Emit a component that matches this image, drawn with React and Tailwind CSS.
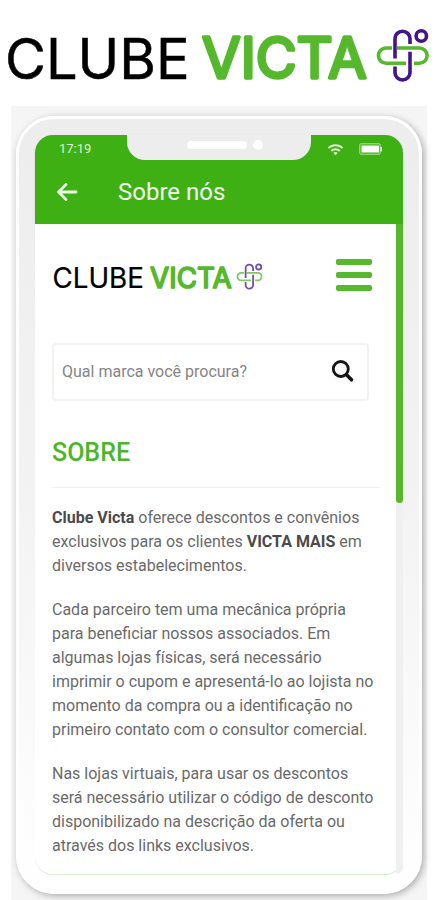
import { useState } from 'react';
import { MdWifi } from 'react-icons/md';

const Logo = ({ className, markClassName }) => (
  <svg viewBox="-4 -6 430 74" className={className} role="img" aria-label="Clube Victa">
    <text x="-3" y="51" fontFamily="Inter, sans-serif" fontSize="56" fontWeight="400" fill="#000000" stroke="#000000" strokeWidth="0.5">
      CLUBE
    </text>
    <text
      x="194"
      y="50"
      fontFamily="Inter, sans-serif"
      fontSize="56"
      fontWeight="400"
      fill="#55b82d"
      stroke="#55b82d"
      strokeWidth="3.4"
      strokeLinejoin="round"
    >
      VICTA
    </text>
    <g fill="none" strokeWidth="3.6" className={markClassName}>
      <path stroke="#55b82d" d="M384 20H378a7.5 7.5 0 0 0 0 15.200H398M389 20H411.500a7.500 7.500 0 0 1 0 15.200H406" />
      <path stroke="#43148a" d="M387 30.500V10.700a7.500 7.500 0 0 1 15 0V16M402 23.700V44.500a7.500 7.500 0 0 1-15 0V38.500" />
      <circle cx="413.300" cy="8" r="5.200" stroke="#43148a" />
    </g>
  </svg>
);

const StatusBar = () => (
  <div className="flex h-[25px]">
    <div className="w-1/4 pl-6 pt-1 text-[13px] leading-5 text-[#dff3d8]">17:19</div>
    <div className="flex flex-1 justify-center gap-[6px] rounded-b-[18px] bg-[#ededed] pl-3 pt-[6px]">
      <span className="h-2 w-[60px] rounded-full bg-white"></span>
      <span className="-mt-px size-[10px] rounded-full bg-white"></span>
    </div>
    <div className="flex w-1/4 items-start justify-end gap-[15px] pr-5 pt-[6px] text-[#e6f6df]">
      <MdWifi size={17} />
      <svg width="24" height="12" viewBox="0 0 24 12" className="mt-[2px]">
        <rect x="0.800" y="0.800" width="20.400" height="10.400" rx="1" fill="none" stroke="currentColor" strokeOpacity="0.7" />
        <rect x="2.500" y="2.500" width="17.500" height="7" fill="#ffffff" />
        <path d="M22.200 4v4.500" stroke="currentColor" strokeWidth="1.500" />
      </svg>
    </div>
  </div>
);

const Header = () => (
  <header className="rounded-t-[18px] bg-[#3eb014] shadow">
    <StatusBar />
    <div className="flex h-16 items-center gap-10 pl-[21px]">
      <button type="button" aria-label="Voltar" className="text-[#e9f8e3]">
        <svg width="22" height="20" viewBox="0 0 22 20" fill="none" stroke="currentColor" strokeWidth="2.800" strokeLinecap="round" strokeLinejoin="round">
          <path d="M20 10H2.500M10 2.500L2.500 10l7.500 7.500" />
        </svg>
      </button>
      <h1 className="text-2xl text-[#f1fbed]">Sobre nós</h1>
    </div>
  </header>
);

const App = () => {
  const [search, setSearch] = useState('');

  return (
    <div className="bg-white font-[Roboto,sans-serif]">
      <div className="px-1 pt-[22px]">
        <Logo className="w-full" />
      </div>

      <main className="mx-[11px] mt-[10px] bg-[#f5f5f5] px-[5px] pb-[7px] pt-[10px]">
        <div className="rounded-[38px] border-[3px] border-white bg-linear-to-b from-[#ededed] via-[#f3f3f3] to-white p-4 shadow-[2px_2px_7px_rgba(0,0,0,0.3)]">
          <Header />

          <div className="flex rounded-b-[18px] border-b border-[#d8f0d0] bg-white">
            <div className="flex-1 pb-4 pl-[17px] pr-4">
              <div className="flex items-start justify-between pr-2 pt-[34px]">
                <Logo className="mt-[2px] w-[213px]" markClassName="opacity-75" />
                <button type="button" aria-label="Menu" className="mt-px flex w-9 flex-col gap-[7px]">
                  <span className="h-[6px] rounded-xs bg-[#55b82d]"></span>
                  <span className="h-[6px] rounded-xs bg-[#55b82d]"></span>
                  <span className="h-[6px] rounded-xs bg-[#55b82d]"></span>
                </button>
              </div>

              <form
                onSubmit={(e) => e.preventDefault()}
                className="mr-[11px] mt-[46px] flex h-[58px] items-center rounded-sm border-2 border-[#f2f2f2] pl-2 pr-3"
              >
                <input
                  type="text"
                  aria-label="Buscar marca"
                  value={search}
                  onChange={(e) => setSearch(e.target.value)}
                  placeholder="Qual marca você procura?"
                  className="min-w-0 flex-1 text-base text-[#777777] placeholder:text-[#858585] focus:outline-none"
                />
                <button type="submit" aria-label="Buscar" className="text-[#151515]">
                  <svg width="24" height="24" viewBox="0 0 24 24" fill="none" stroke="currentColor">
                    <circle cx="9.800" cy="9" r="7.500" strokeWidth="2.800" />
                    <path d="M15.500 14.800l5 5" strokeWidth="3.600" strokeLinecap="round" />
                  </svg>
                </button>
              </form>

              <h2 className="mt-9 text-[25px] font-medium leading-8 text-[#4db52a]">SOBRE</h2>
              <hr className="mt-[18px] border-[#f0f0f0]" />

              <div className="mt-[18px] space-y-5 text-base leading-6 text-[#6a6a6a]">
                <p>
                  <strong className="font-bold text-[#4a4a4a]">Clube Victa</strong> oferece descontos e convênios
                  exclusivos para os clientes <strong className="font-bold text-[#4a4a4a]">VICTA MAIS</strong> em
                  diversos estabelecimentos.
                </p>
                <p>
                  Cada parceiro tem uma mecânica própria para beneficiar nossos associados. Em algumas lojas
                  físicas, será necessário imprimir o cupom e apresentá-lo ao lojista no momento da compra ou a
                  identificação no primeiro contato com o consultor comercial.
                </p>
                <p>
                  Nas lojas virtuais, para usar os descontos será necessário utilizar o código de desconto
                  disponibilizado na descrição da oferta ou através dos links exclusivos.
                </p>
              </div>
            </div>

            {/* scrollbar */}
            <div className="w-[7px] rounded-br-[18px] bg-[#f0f0f0]">
              <div className="h-[279px] rounded-b-full bg-[#55b82d]"></div>
            </div>
          </div>
        </div>
      </main>
    </div>
  );
};

export default App;
